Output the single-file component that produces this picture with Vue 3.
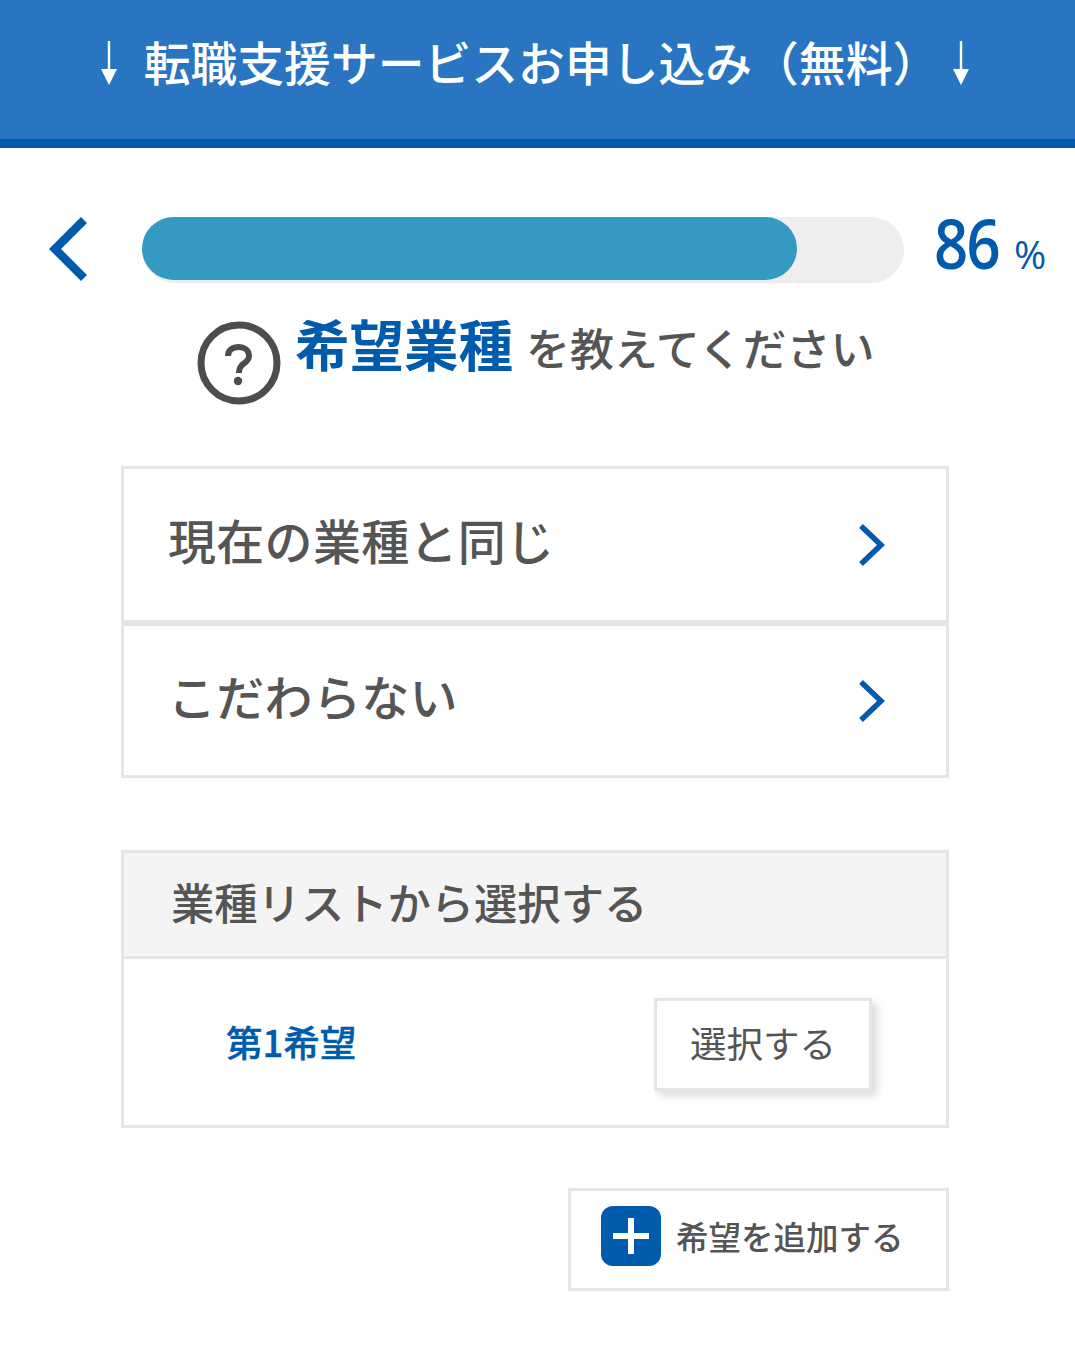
<script setup>
const options = ['現在の業種と同じ', 'こだわらない']
</script>

<template>
  <div class="page">
    <header class="banner">
      <svg class="arrow arrow-left" width="16" height="44" viewBox="0 0 16 44">
        <path d="M8 0 V30" stroke="#fff" stroke-width="2.4" fill="none" />
        <path d="M0 28 H16 L8 44 Z" fill="#fff" />
      </svg>
      <span class="banner-title">転職支援サービスお申し込み（無料）</span>
      <svg class="arrow arrow-right" width="16" height="44" viewBox="0 0 16 44">
        <path d="M8 0 V30" stroke="#fff" stroke-width="2.4" fill="none" />
        <path d="M0 28 H16 L8 44 Z" fill="#fff" />
      </svg>
    </header>

    <div class="progress-row">
      <svg class="back" width="40" height="64" viewBox="0 0 40 64">
        <path d="M35 3 L6 32 L35 61" fill="none" stroke="#005bac" stroke-width="8.5" />
      </svg>
      <div class="track"><div class="fill" style="width: 86%"></div></div>
      <div class="percent"><span class="num">86</span><span class="pct">%</span></div>
    </div>

    <div class="question">
      <svg class="help" width="84" height="84" viewBox="0 0 84 84">
        <circle cx="42" cy="42" r="38" fill="none" stroke="#4d4d4d" stroke-width="7" />
        <path d="M31 35 C31 29 36 26 42 26 C47 26 52 29 52 35 C52 40 47 42 45 44 C43 46 42 48 42 52" fill="none" stroke="#4d4d4d" stroke-width="6" />
        <circle cx="41" cy="60" r="4.2" fill="#4d4d4d" />
      </svg>
      <div class="question-text">
        <span class="q-strong">希望業種</span><span class="q-rest">を教えてください</span>
      </div>
    </div>

    <div class="content">
      <div class="options">
        <div v-for="o in options" :key="o" class="option">
          <span class="option-label">{{ o }}</span>
          <svg class="chev" width="28" height="44" viewBox="0 0 28 44">
            <path d="M3 3 L23 22 L3 41" fill="none" stroke="#005bac" stroke-width="5.5" />
          </svg>
        </div>
      </div>

      <section class="list">
        <div class="list-head"><span class="list-title">業種リストから選択する</span></div>
        <div class="list-body">
          <span class="rank">第1希望</span>
          <button class="select">選択する</button>
        </div>
      </section>

      <div class="add-row">
        <div class="add">
          <span class="plus">
            <svg width="38" height="38" viewBox="0 0 38 38">
              <path d="M19 1 V37 M1 19 H37" stroke="#fff" stroke-width="6" fill="none" />
            </svg>
          </span>
          <span class="add-label">希望を追加する</span>
        </div>
      </div>
    </div>
  </div>
</template>

<style>
html, body { margin: 0; background: #fff; }
</style>

<style scoped>
.page {
  width: 1075px;
  height: 1361px;
  overflow: hidden;
  font-family: "Noto Sans CJK JP", "Noto Sans", sans-serif;
  color: #555;
}
.banner {
  box-sizing: border-box;
  height: 148px;
  background: #2a75c2;
  border-bottom: 9px solid #005bac;
  display: flex;
  align-items: center;
  justify-content: center;
  color: #fff;
  font-size: 46.8px;
  font-weight: 500;
  line-height: 1;
  padding: 0 5px 17px 0;
}
.banner-title { white-space: nowrap; }
.arrow { flex: none; }
.arrow-left { margin-right: 27px; margin-top: 4px; }
.arrow-right { margin-left: 14px; margin-top: 4px; }
.progress-row {
  display: flex;
  align-items: flex-start;
  margin-top: 69px;
  padding-left: 49px;
}
.back { margin-right: 53px; flex: none; }
.track {
  width: 762px;
  height: 66px;
  border-radius: 33px;
  background: #eee;
  flex: none;
}
.fill {
  height: 63px;
  border-radius: 32px;
  background: #359ac2;
}
.percent {
  margin-left: 30px;
  color: #005bac;
  display: flex;
  align-items: baseline;
  font-family: "Open Sans", sans-serif;
  line-height: 51px;
}
.num {
  font-size: 68px;
  font-weight: 600;
  letter-spacing: -2px;
  transform: scaleX(0.88);
  transform-origin: left;
  width: 68px;
}
.pct { font-size: 39px; margin-left: 12px; }
.question {
  display: flex;
  align-items: flex-start;
  margin-top: 39px;
  padding-left: 197px;
}
.help { flex: none; margin: -1px 14px 1px 0; filter: blur(0.5px); }
.question-text {
  display: flex;
  align-items: baseline;
  margin-top: -14px;
  white-space: nowrap;
}
.q-strong {
  font-size: 54.5px;
  font-weight: 700;
  color: #005bac;
  line-height: 70px;
  margin-right: 13px;
}
.q-rest { font-size: 44px; font-weight: 500; }
.content {
  width: 828px;
  margin: 60px 0 0 121px;
}
.options { display: flex; flex-direction: column; }
.option {
  box-sizing: border-box;
  height: 157px;
  border: 3px solid #e5e5e5;
  display: flex;
  align-items: center;
  justify-content: space-between;
  padding: 0 60px 0 44px;
  font-size: 48px;
  font-weight: 500;
  white-space: nowrap;
}
.option-label { margin-bottom: 12px; letter-spacing: 0.3px; }
.option + .option {
  height: 155px;
}
.list {
  box-sizing: border-box;
  margin-top: 72px;
  height: 278px;
  border: 3px solid #e5e5e5;
}
.list-head {
  box-sizing: border-box;
  height: 106px;
  background: #f4f4f4;
  border-bottom: 3px solid #e5e5e5;
  padding-left: 47px;
  display: flex;
  align-items: center;
  font-size: 43.3px;
  font-weight: 500;
}
.list-title { margin-bottom: 8px; }
.list-body {
  display: flex;
  align-items: center;
  justify-content: space-between;
  height: 166px;
  padding: 0 74px 0 102px;
}
.rank {
  font-size: 36.5px;
  font-weight: 500;
  color: #005bac;
  margin-bottom: 2px;
  -webkit-text-stroke: 0.4px #005bac;
}
.select {
  box-sizing: border-box;
  width: 218px;
  height: 93px;
  background: #fff;
  border: 3px solid #e5e5e5;
  box-shadow: 5px 5px 8px rgba(0, 0, 0, 0.14);
  font-family: inherit;
  font-size: 36.5px;
  color: #555;
  padding: 0 0 4px;
  margin-top: 4px;
}
.add-row {
  display: flex;
  justify-content: flex-end;
  margin-top: 60px;
}
.add {
  box-sizing: border-box;
  width: 381px;
  height: 103px;
  border: 3px solid #e5e5e5;
  display: flex;
  align-items: center;
  padding: 0 0 8px 30px;
}
.plus {
  width: 60px;
  height: 60px;
  border-radius: 12px;
  background: #005bac;
  display: flex;
  align-items: center;
  justify-content: center;
  margin-right: 15px;
}
.add-label { font-size: 32.5px; font-weight: 500; white-space: nowrap; }
</style>
